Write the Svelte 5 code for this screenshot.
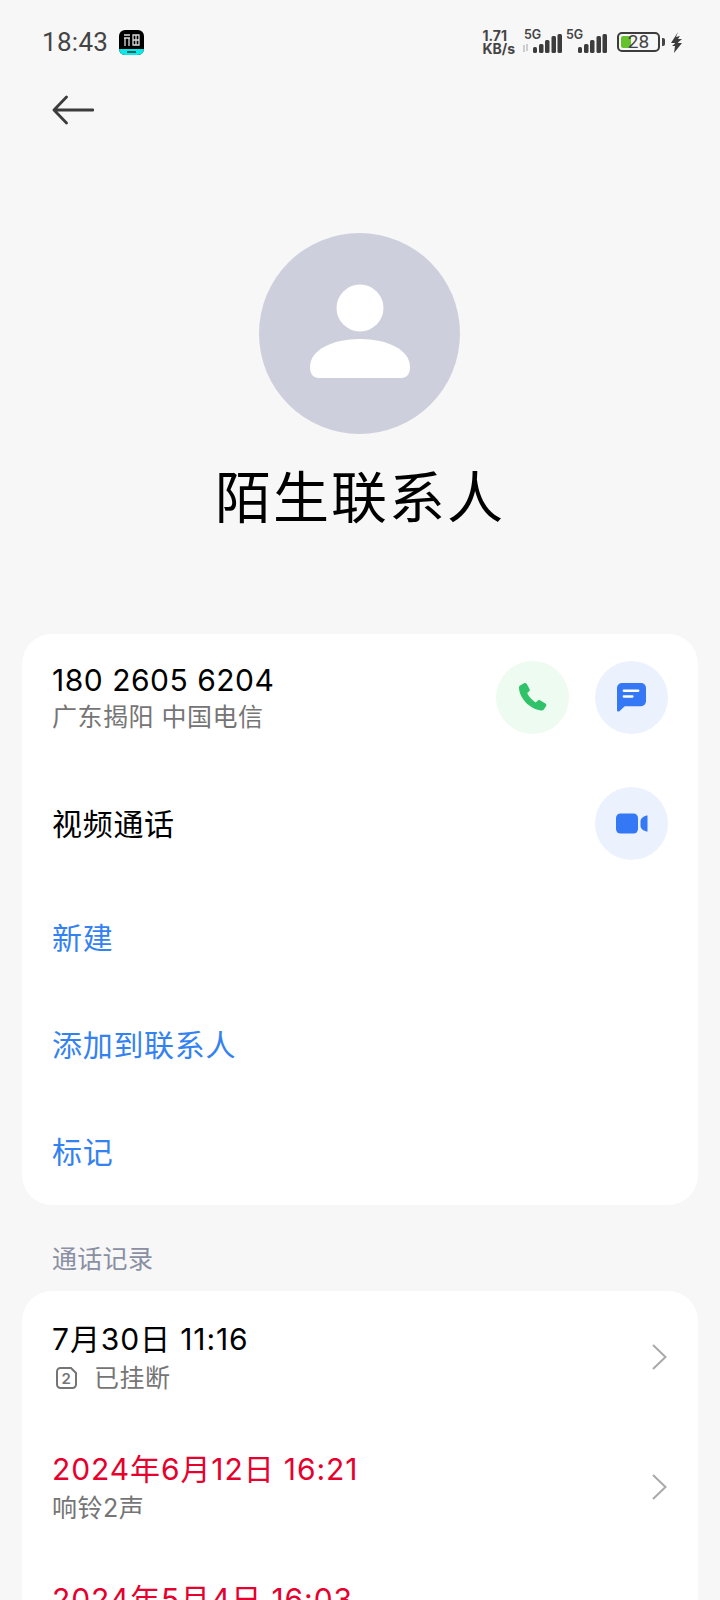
<script>
	// Call history rows shown in the lower card
	const calls = [
		{ date: '7月30日 11:16', note: '已挂断', sim: true, missed: false },
		{ date: '2024年6月12日 16:21', note: '响铃2声', sim: false, missed: true },
		{ date: '2024年5月4日 16:03', note: '响铃1声', sim: false, missed: true }
	];
	const links = ['新建', '添加到联系人', '标记'];
</script>

<div class="page">
	<header class="status">
		<div class="status-left">
			<span class="time">18:43</span>
			<svg class="app-badge" width="25" height="25" viewBox="0 0 25 25">
				<rect width="25" height="25" rx="6" fill="#000" />
				<path d="M0 19h25a6 6 0 0 1-6 6H6a6 6 0 0 1-6-6z" fill="#0fe6e6" />
				<path d="M5 5h6M5 8h6M6 8v8M10 8v8M14 5h6v10h-6zM17 5v10M14 10h6" stroke="#ddd" stroke-width="1.3" fill="none" />
				<rect x="8" y="21" width="9" height="2" fill="#066" />
			</svg>
		</div>
		<div class="status-right">
			<span class="speed">1.71<br />KB/s</span>
			<div class="signal">
				<span class="net">5G</span>
				<svg width="40" height="21" viewBox="0 0 40 21">
					<path d="M2 12v7M5 18v-7" stroke="#bbb" stroke-width="1.4" />
					<rect x="11" y="14" width="4" height="6" rx="1.5" fill="#3c3c3c" />
					<rect x="17" y="11" width="4.500" height="9" rx="1.500" fill="#3c3c3c" />
					<rect x="23" y="7" width="4.500" height="13" rx="1.500" fill="#3c3c3c" />
					<rect x="29.500" y="3" width="4.500" height="17" rx="1.500" fill="#3c3c3c" />
					<rect x="35.500" y="1" width="4.500" height="19" rx="1.500" fill="#3c3c3c" />
				</svg>
			</div>
			<div class="signal second">
				<span class="net">5G</span>
				<svg width="29" height="21" viewBox="0 0 29 21">
					<rect x="0" y="14" width="4" height="6" rx="1.500" fill="#3c3c3c" />
					<rect x="6" y="11" width="4.500" height="9" rx="1.500" fill="#3c3c3c" />
					<rect x="12" y="7" width="4.500" height="13" rx="1.500" fill="#3c3c3c" />
					<rect x="18.500" y="3" width="4.500" height="17" rx="1.500" fill="#3c3c3c" />
					<rect x="24.500" y="1" width="4.500" height="19" rx="1.500" fill="#3c3c3c" />
				</svg>
			</div>
			<div class="battery">
				<div class="cell"><i class="level"></i><span>28</span></div>
				<i class="nub"></i>
			</div>
			<svg width="13" height="21" viewBox="0 0 13 21">
				<path d="M8 0 1 11h4l-1 3 8-7H8l2-3-4 1zM8 9 2 14h3l-1 7 8-10H8z" fill="#3c3c3c" />
			</svg>
		</div>
	</header>

	<button class="back" aria-label="返回">
		<svg width="42" height="30" viewBox="0 0 42 30">
			<path d="M14.500 2 2 15l12.500 13M3 15h38" fill="none" stroke="#3c3c3c" stroke-width="2.800" stroke-linecap="round" stroke-linejoin="round" />
		</svg>
	</button>

	<section class="profile">
		<div class="avatar">
			<svg class="person" width="100" height="95" viewBox="0 0 100 95">
				<circle cx="50" cy="24" r="23.500" fill="#fff" />
				<path d="M0 83c0-17 22-28 50-28s50 11 50 28c0 7-3 11-9 11H9C3 94 0 90 0 83z" fill="#fff" />
			</svg>
		</div>
		<h1>陌生联系人</h1>
	</section>

	<section class="card contact">
		<div class="row number">
			<div class="grow">
				<div class="phone">180 2605 6204</div>
				<div class="sub">广东揭阳 中国电信</div>
			</div>
			<button class="round green" aria-label="呼叫">
				<svg width="34" height="34" viewBox="0 0 34 34">
					<path d="M3 6.500c0-1 .6-1.800 1.500-2.300L8 2.300c1-.6 2.200-.2 2.800.8l2.700 4.800c.5 1 .3 2-.5 2.700l-1.800 1.500c1.500 3.500 5 7.500 8.500 9.300l1.900-1.700c.8-.7 1.900-.8 2.800-.2l5 3c1 .6 1.200 1.900.6 2.800l-2 3c-.7 1-1.800 1.400-3 1.200C13.500 28 3.300 17 3 6.500z" fill="#2fc268" />
				</svg>
			</button>
			<button class="round blue" aria-label="短信">
				<svg width="29" height="29" viewBox="0 0 30 30">
					<path d="M5 0h20a5 5 0 0 1 5 5v14a5 5 0 0 1-5 5H8l-5.500 5.200C1.500 30 0 29.500 0 28V5a5 5 0 0 1 5-5z" fill="#3478f6" />
					<path d="M7 8h15M7 14h9" stroke="#fff" stroke-width="2.400" stroke-linecap="round" />
				</svg>
			</button>
		</div>
		<div class="row video">
			<div class="grow title">视频通话</div>
			<button class="round blue" aria-label="视频">
				<svg width="32" height="21" viewBox="0 0 32 21">
					<rect width="22" height="20" y=".5" rx="4.500" fill="#3478f6" />
					<path d="M31.500 2.500v16c-3 0-7-2.500-7-5.500V8c0-3 4-5.500 7-5.500z" fill="#3478f6" />
				</svg>
			</button>
		</div>
		{#each links as link}
			<div class="row link">{link}</div>
		{/each}
	</section>

	<div class="section-label">通话记录</div>

	<section class="card log">
		{#each calls as call}
			<div class="row call">
				<div class="grow">
					<div class="date" class:missed={call.missed}>{call.date}</div>
					<div class="sub note">
						{#if call.sim}
							<svg class="sim" width="23" height="24" viewBox="0 0 23 24">
								<path d="M5.500 2h10.500l5 5v11.500a3.500 3.500 0 0 1-3.500 3.500h-12a3.500 3.500 0 0 1-3.500-3.500v-13a3.500 3.500 0 0 1 3.500-3.500z" fill="none" stroke="#757575" stroke-width="2" />
								<text x="11.500" y="17.500" text-anchor="middle" font-size="15" font-weight="600" fill="#757575">2</text>
							</svg>
						{/if}
						<span>{call.note}</span>
					</div>
				</div>
				<svg class="chevron" width="17" height="28" viewBox="0 0 17 28">
					<path d="M2 2l12.500 12L2 26" fill="none" stroke="#a9a9a9" stroke-width="2" />
				</svg>
			</div>
		{/each}
	</section>
</div>

<style>
	:global(body) {
		margin: 0;
		background: #f7f7f7;
	}

	.page {
		width: 720px;
		height: 1600px;
		overflow: hidden;
		background: #f7f7f7;
		font-family: Roboto, "Noto Sans CJK SC", sans-serif;
		color: #000;
	}

	button {
		border: none;
		padding: 0;
		background: none;
	}

	.status {
		display: flex;
		justify-content: space-between;
		align-items: center;
		height: 26px;
		padding: 29px 37px 0 42px;
		color: #444;
	}

	.status-left,
	.status-right {
		display: flex;
		align-items: center;
	}

	.time {
		font-size: 26px;
		letter-spacing: 0.3px;
		margin-right: 11px;
	}

	.speed {
		font-family: Inter, sans-serif;
		font-size: 14px;
		font-weight: 700;
		line-height: 13px;
		margin-right: 7px;
	}

	.signal {
		position: relative;
		width: 40px;
		height: 24px;
		display: flex;
		align-items: flex-end;
		margin-right: 4px;
	}

	.signal.second {
		width: 41px;
		justify-content: flex-end;
		margin-right: 10px;
	}

	.net {
		position: absolute;
		left: 2px;
		top: -3px;
		font-family: Inter, sans-serif;
		font-size: 12.500px;
		font-weight: 600;
	}

	.signal.second .net {
		left: 0;
	}

	.battery {
		display: flex;
		align-items: center;
		margin-right: 5px;
	}

	.cell {
		position: relative;
		box-sizing: border-box;
		width: 43px;
		height: 20px;
		border: 2px solid #3c3c3c;
		border-radius: 5px;
		font-size: 19px;
		line-height: 16px;
		text-align: center;
	}

	.cell span {
		position: relative;
	}

	.level {
		position: absolute;
		left: 2px;
		top: 2px;
		bottom: 2px;
		width: 10px;
		border-radius: 2px;
		background: #66c22a;
	}

	.nub {
		width: 3px;
		height: 8px;
		margin-left: 2px;
		background: #444;
		border-radius: 0 2px 2px 0;
	}

	.back {
		display: block;
		margin: 40px 0 0 52px;
		height: 30px;
	}

	.profile {
		display: flex;
		flex-direction: column;
		align-items: center;
		margin-top: 108px;
	}

	.avatar {
		width: 201px;
		height: 201px;
		margin-right: 1px;
		border-radius: 50%;
		background: #cdd0dc;
		display: flex;
		align-items: center;
		justify-content: center;
	}

	.person {
		margin-bottom: 5px;
	}

	h1 {
		margin: 30px 0 0;
		font-size: 56px;
		font-weight: 400;
		line-height: 70px;
		letter-spacing: 2px;
	}

	.card {
		margin: 0 22px;
		padding: 0 30px;
		background: #fff;
		border-radius: 30px;
	}

	.contact {
		margin-top: 100px;
		height: 571px;
		box-sizing: border-box;
	}

	.row {
		display: flex;
		align-items: center;
	}

	.grow {
		flex: 1;
	}

	.number {
		padding-top: 27px;
		height: 73px;
	}

	.number .round + .round {
		margin-left: 26px;
	}

	.phone {
		font-family: Inter, "Noto Sans CJK SC", sans-serif;
		font-size: 30px;
		line-height: 38px;
		letter-spacing: 0.5px;
	}

	.sub {
		font-family: Inter, "Noto Sans CJK SC", sans-serif;
		font-size: 25px;
		line-height: 36px;
		letter-spacing: 0.5px;
		color: #757575;
	}

	.round {
		width: 73px;
		height: 73px;
		border-radius: 50%;
		display: flex;
		align-items: center;
		justify-content: center;
	}

	.green {
		background: #edfbf1;
	}

	.blue {
		background: #ebf1fd;
	}

	.video {
		margin-top: 53px;
		height: 73px;
	}

	.title {
		font-size: 30px;
		letter-spacing: 0.7px;
		padding-bottom: 3px;
	}

	.link {
		height: 107px;
		font-size: 30px;
		letter-spacing: 0.7px;
		color: #3482f0;
	}

	.video + .link {
		margin-top: 22px;
	}

	.section-label {
		margin: 37px 0 0 52px;
		font-size: 25px;
		line-height: 36px;
		letter-spacing: 0.3px;
		color: #8a8fa3;
	}

	.log {
		margin-top: 13px;
		padding-top: 26px;
		padding-bottom: 40px;
	}

	.call {
		height: 130px;
		align-items: flex-start;
	}

	.date {
		font-family: Inter, "Noto Sans CJK SC", sans-serif;
		font-size: 30px;
		line-height: 44px;
		letter-spacing: 0.9px;
	}

	.date.missed {
		color: #e6002d;
	}

	.note {
		display: flex;
		align-items: center;
		gap: 16px;
		line-height: 34px;
	}

	.sim {
		margin-left: 3px;
	}

	.chevron {
		margin-top: 26px;
	}
</style>
